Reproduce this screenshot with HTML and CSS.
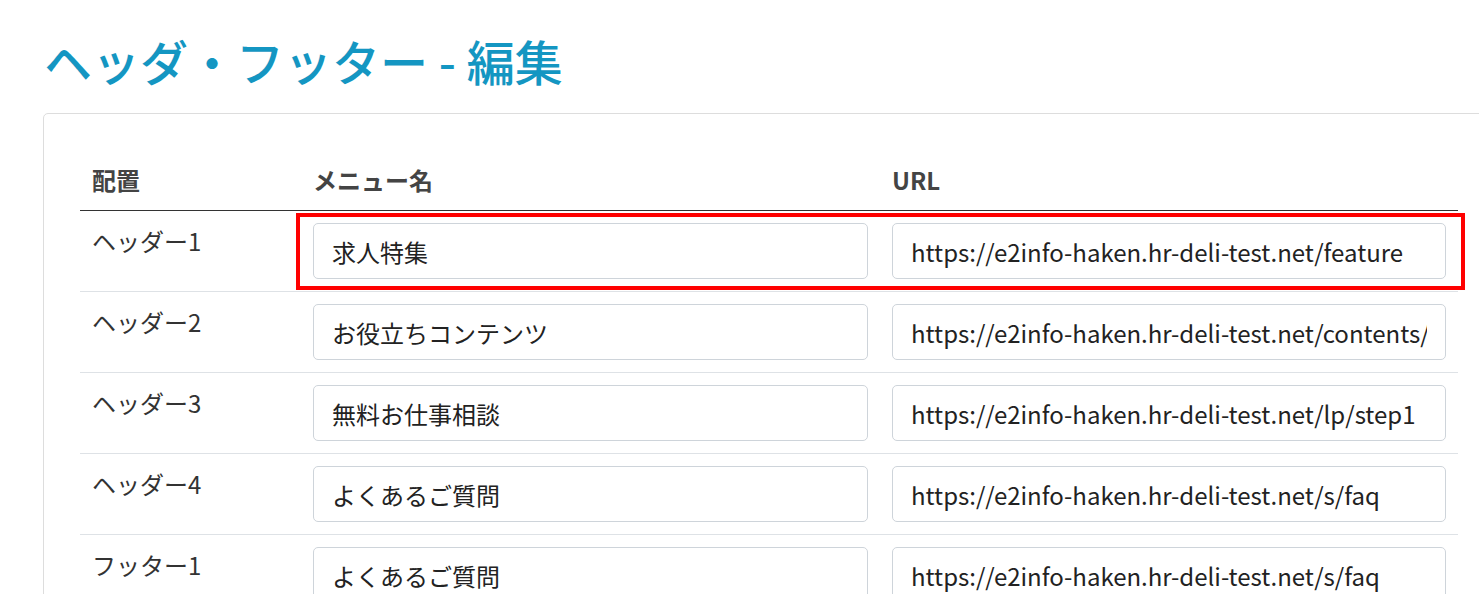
FILE: index.html
```html
<!DOCTYPE html>
<html lang="ja">
<head>
    <meta charset="UTF-8">
    <title>ヘッダ・フッター - 編集</title>
    <link rel="stylesheet" href="styles.css">
</head>
<body>
    <h1 class="page-title">ヘッダ・フッター - 編集</h1>

    <div class="card">
        <table class="menu-table">
            <thead>
                <tr>
                    <th class="col-place">配置</th>
                    <th class="col-name">メニュー名</th>
                    <th class="col-url">URL</th>
                </tr>
            </thead>
            <tbody>
                <tr>
                    <td>ヘッダー1</td>
                    <td><input class="field" type="text" value="求人特集"></td>
                    <td><input class="field" type="text" value="https://e2info-haken.hr-deli-test.net/feature"></td>
                </tr>
                <tr>
                    <td>ヘッダー2</td>
                    <td><input class="field" type="text" value="お役立ちコンテンツ"></td>
                    <td><input class="field" type="text" value="https://e2info-haken.hr-deli-test.net/contents/"></td>
                </tr>
                <tr>
                    <td>ヘッダー3</td>
                    <td><input class="field" type="text" value="無料お仕事相談"></td>
                    <td><input class="field" type="text" value="https://e2info-haken.hr-deli-test.net/lp/step1"></td>
                </tr>
                <tr>
                    <td>ヘッダー4</td>
                    <td><input class="field" type="text" value="よくあるご質問"></td>
                    <td><input class="field" type="text" value="https://e2info-haken.hr-deli-test.net/s/faq"></td>
                </tr>
                <tr>
                    <td>フッター1</td>
                    <td><input class="field" type="text" value="よくあるご質問"></td>
                    <td><input class="field" type="text" value="https://e2info-haken.hr-deli-test.net/s/faq"></td>
                </tr>
            </tbody>
        </table>

        <!-- highlight annotation over the first row -->
        <div class="highlight"></div>
    </div>
</body>
</html>
```

FILE: styles.css
```css
html, body {
    overflow: hidden;
}
body {
    margin: 0;
    background: #ffffff;
    font-family: "Noto Sans CJK JP", "Noto Sans", sans-serif;
    color: #333333;
}
.page-title {
    margin: 0;
    padding: 28px 0 0 44px;
    height: 83px;
    box-sizing: border-box;
    font-size: 48px;
    font-weight: 500;
    line-height: 64px;
    color: #1496c2;
}
.card {
    position: relative;
    margin: 30px 0 0 43px;
    width: 1450px;
    padding: 40px 36px;
    border: 1px solid #dddddd;
    border-radius: 5px;
    background: #ffffff;
}
.menu-table {
    width: 1378px;
    border-collapse: collapse;
    font-size: 24px;
}
.menu-table th {
    text-align: left;
    font-weight: bold;
    color: #444444;
    padding: 8px 12px 12px;
    line-height: 36px;
    border-bottom: 1px solid #333333;
}
.col-place {
    width: 221px;
    box-sizing: border-box;
}
.col-name {
    width: 579px;
    box-sizing: border-box;
}
.menu-table td {
    padding: 12px;
    vertical-align: top;
    border-bottom: 1px solid #dee2e6;
    line-height: 36px;
}
.field {
    display: block;
    width: 100%;
    height: 56px;
    box-sizing: border-box;
    padding: 0 18px;
    border: 1px solid #ced4da;
    border-radius: 5px;
    font-family: inherit;
    font-size: 24px;
    color: #222222;
    background: #ffffff;
}
.highlight {
    position: absolute;
    left: 252px;
    top: 99px;
    width: 1169px;
    height: 77px;
    box-sizing: border-box;
    border: 4px solid #ff0000;
    pointer-events: none;
}
```
